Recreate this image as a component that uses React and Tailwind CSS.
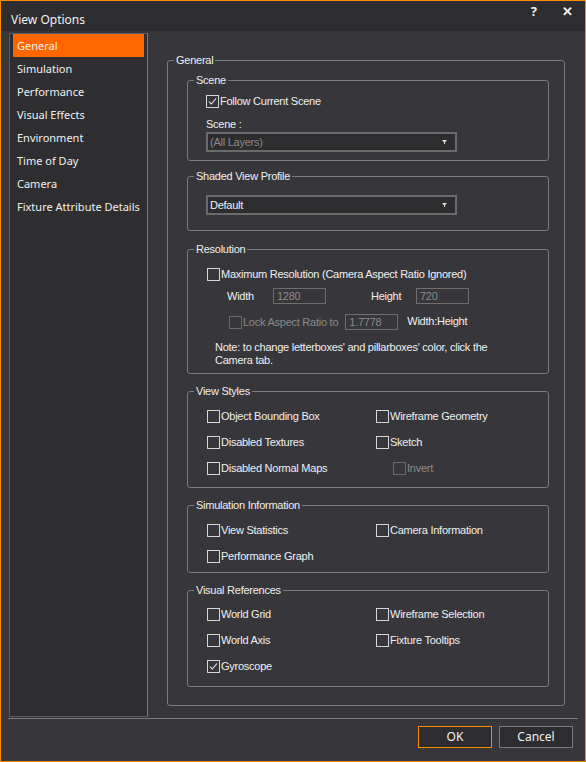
import React from 'react';

const ui = { fontFamily: '"Noto Sans", "Open Sans", sans-serif' };
const sans = { fontFamily: '"Liberation Sans", Arial, sans-serif' };

const navItems = ['General', 'Simulation', 'Performance', 'Visual Effects', 'Environment', 'Time of Day', 'Camera', 'Fixture Attribute Details'];

function Tick() {
    return (
        <svg width="11" height="11" viewBox="0 0 11 11" fill="none">
            <path d="M2 5.5 L4.3 8 L9 2.5" stroke="#eeeeee" strokeWidth="1.1" />
        </svg>
    );
}

function Check({ label, checked, disabled }) {
    return (
        <div className="flex items-center h-[13px]">
            <span className={`w-[13px] h-[13px] shrink-0 border flex items-center justify-center ${disabled ? 'border-[#6a6a6a]' : 'border-[#d6d6d6]'}`}>
                {checked && <Tick />}
            </span>
            <span className={`ml-[1px] whitespace-nowrap leading-[13px] ${disabled ? 'text-[#8a8a8a]' : 'text-[#f0f0f0]'}`}>{label}</span>
        </div>
    );
}

function Group({ title, className, children }) {
    return (
        <fieldset className={`border border-[#7c7c7c] rounded-[3px] ${className}`}>
            <legend className="ml-[6px] px-[2px] leading-[14px] text-[#f0f0f0]">{title}</legend>
            {children}
        </fieldset>
    );
}

function Select({ value, disabled }) {
    return (
        <div className="ml-[18px] w-[251px] h-[20px] border-2 border-[#6b6b6b] bg-[#2d2d30] flex items-center justify-between pl-[2px] pr-[8px]">
            <span className={disabled ? 'text-[#8a8a8a]' : 'text-[#f0f0f0]'}>{value}</span>
            <svg width="5" height="4" viewBox="0 0 5 4">
                <path d="M0 0 H5 L2.5 3 Z" fill="#e0e0e0" />
                <rect x="2" y="2" width="1" height="2" fill="#e0e0e0" />
            </svg>
        </div>
    );
}

function Field({ value, className }) {
    return (
        <div className={`h-[16px] w-[53px] border border-[#6e6e6e] flex items-center pl-[3px] text-[#8a8a8a] ${className}`}>{value}</div>
    );
}

export default function App() {
    return (
        <div className="w-[586px] h-[762px] border border-[#ff8c00] bg-[#37363b] flex flex-col overflow-hidden">
            {/* title bar */}
            <div className="h-[30px] bg-[#2d2d30] flex items-center justify-between pl-[10px] pr-[12px] text-[#f0f0f0] text-[12px]" style={ui}>
                <span className="mt-[7px]">View Options</span>
                <div className="flex items-center gap-[25px] text-[13px] font-bold -mt-[8px]">
                    <span>?</span>
                    <span>✕</span>
                </div>
            </div>

            <div className="flex h-[687px]">
                {/* side nav */}
                <div className="ml-[8px] mt-[2px] w-[139px] h-[684px] border border-[#5c5c5c] border-r-[#7c7c7c] bg-[#2e2e31] px-[3px] text-[11px] text-[#f0f0f0]" style={ui}>
                    {navItems.map((item, i) => (
                        <div key={item} className={`h-[23px] flex items-center pl-[4px] pt-[1px] whitespace-nowrap ${i === 0 ? 'bg-[#ff6600]' : ''}`}>{item}</div>
                    ))}
                </div>

                {/* settings */}
                <div className="pl-[19px] pt-[22px] text-[11px] tracking-[-0.25px]" style={sans}>
                    <Group title="General" className="w-[398px] h-[653px]">
                        <div className="ml-[19px] w-[362px] flex flex-col">
                            <Group title="Scene" className="mt-[6px]">
                                <div className="pt-[8px] pb-[8px]">
                                    <div className="ml-[18px]"><Check label="Follow Current Scene" checked /></div>
                                    <div className="ml-[18px] mt-[9px] h-[14px] leading-[14px] text-[#f0f0f0]">Scene :</div>
                                    <div className="mt-[1px]"><Select value="(All Layers)" disabled /></div>
                                </div>
                            </Group>

                            <Group title="Shaded View Profile" className="mt-[8px]">
                                <div className="pt-[12px] pb-[15px]">
                                    <Select value="Default" />
                                </div>
                            </Group>

                            <Group title="Resolution" className="mt-[11px]">
                                <div className="pt-[12px] pb-[6px] text-[#f0f0f0]">
                                    <div className="ml-[19px]"><Check label="Maximum Resolution (Camera Aspect Ratio Ignored)" /></div>
                                    <div className="flex items-center mt-[7px] h-[16px]">
                                        <span className="ml-[39px] w-[46px]">Width</span>
                                        <Field value="1280" />
                                        <span className="ml-[45px] w-[45px]">Height</span>
                                        <Field value="720" />
                                    </div>
                                    <div className="flex items-center mt-[10px] h-[16px]">
                                        <span className="ml-[41px]"><Check label="Lock Aspect Ratio to" disabled /></span>
                                        <Field value="1.7778" className="ml-[7px]" />
                                        <span className="ml-[9px] -mt-[1px]">Width:Height</span>
                                    </div>
                                    <p className="ml-[27px] mt-[11px] leading-[13px] w-[275px]">
                                        Note: to change letterboxes' and pillarboxes' color, click the Camera tab.
                                    </p>
                                </div>
                            </Group>

                            <Group title="View Styles" className="mt-[10px]">
                                <div className="grid grid-cols-[169px_1fr] gap-y-[13px] pl-[19px] pt-[12px] pb-[12px]">
                                    <Check label="Object Bounding Box" />
                                    <Check label="Wireframe Geometry" />
                                    <Check label="Disabled Textures" />
                                    <Check label="Sketch" />
                                    <Check label="Disabled Normal Maps" />
                                    <div className="ml-[17px]"><Check label="Invert" disabled /></div>
                                </div>
                            </Group>

                            <Group title="Simulation Information" className="mt-[10px]">
                                <div className="grid grid-cols-[169px_1fr] gap-y-[13px] pl-[19px] pt-[12px] pb-[9px]">
                                    <Check label="View Statistics" />
                                    <Check label="Camera Information" />
                                    <Check label="Performance Graph" />
                                </div>
                            </Group>

                            <Group title="Visual References" className="mt-[10px]">
                                <div className="grid grid-cols-[169px_1fr] gap-y-[13px] pl-[19px] pt-[11px] pb-[13px]">
                                    <Check label="World Grid" />
                                    <Check label="Wireframe Selection" />
                                    <Check label="World Axis" />
                                    <Check label="Fixture Tooltips" />
                                    <Check label="Gyroscope" checked />
                                </div>
                            </Group>
                        </div>
                    </Group>
                </div>
            </div>

            <div className="ml-[7px] w-[570px] h-[1px] bg-[#7c7c7c]" />

            <div className="flex justify-end gap-[7px] pr-[12px] mt-[7px] text-[12px] text-[#f0f0f0]" style={ui}>
                <button className="w-[74px] h-[22px] border border-[#ff8c00] bg-[#2d2d30]">OK</button>
                <button className="w-[74px] h-[22px] border border-[#7c7c7c] bg-[#2d2d30]">Cancel</button>
            </div>
        </div>
    );
}
